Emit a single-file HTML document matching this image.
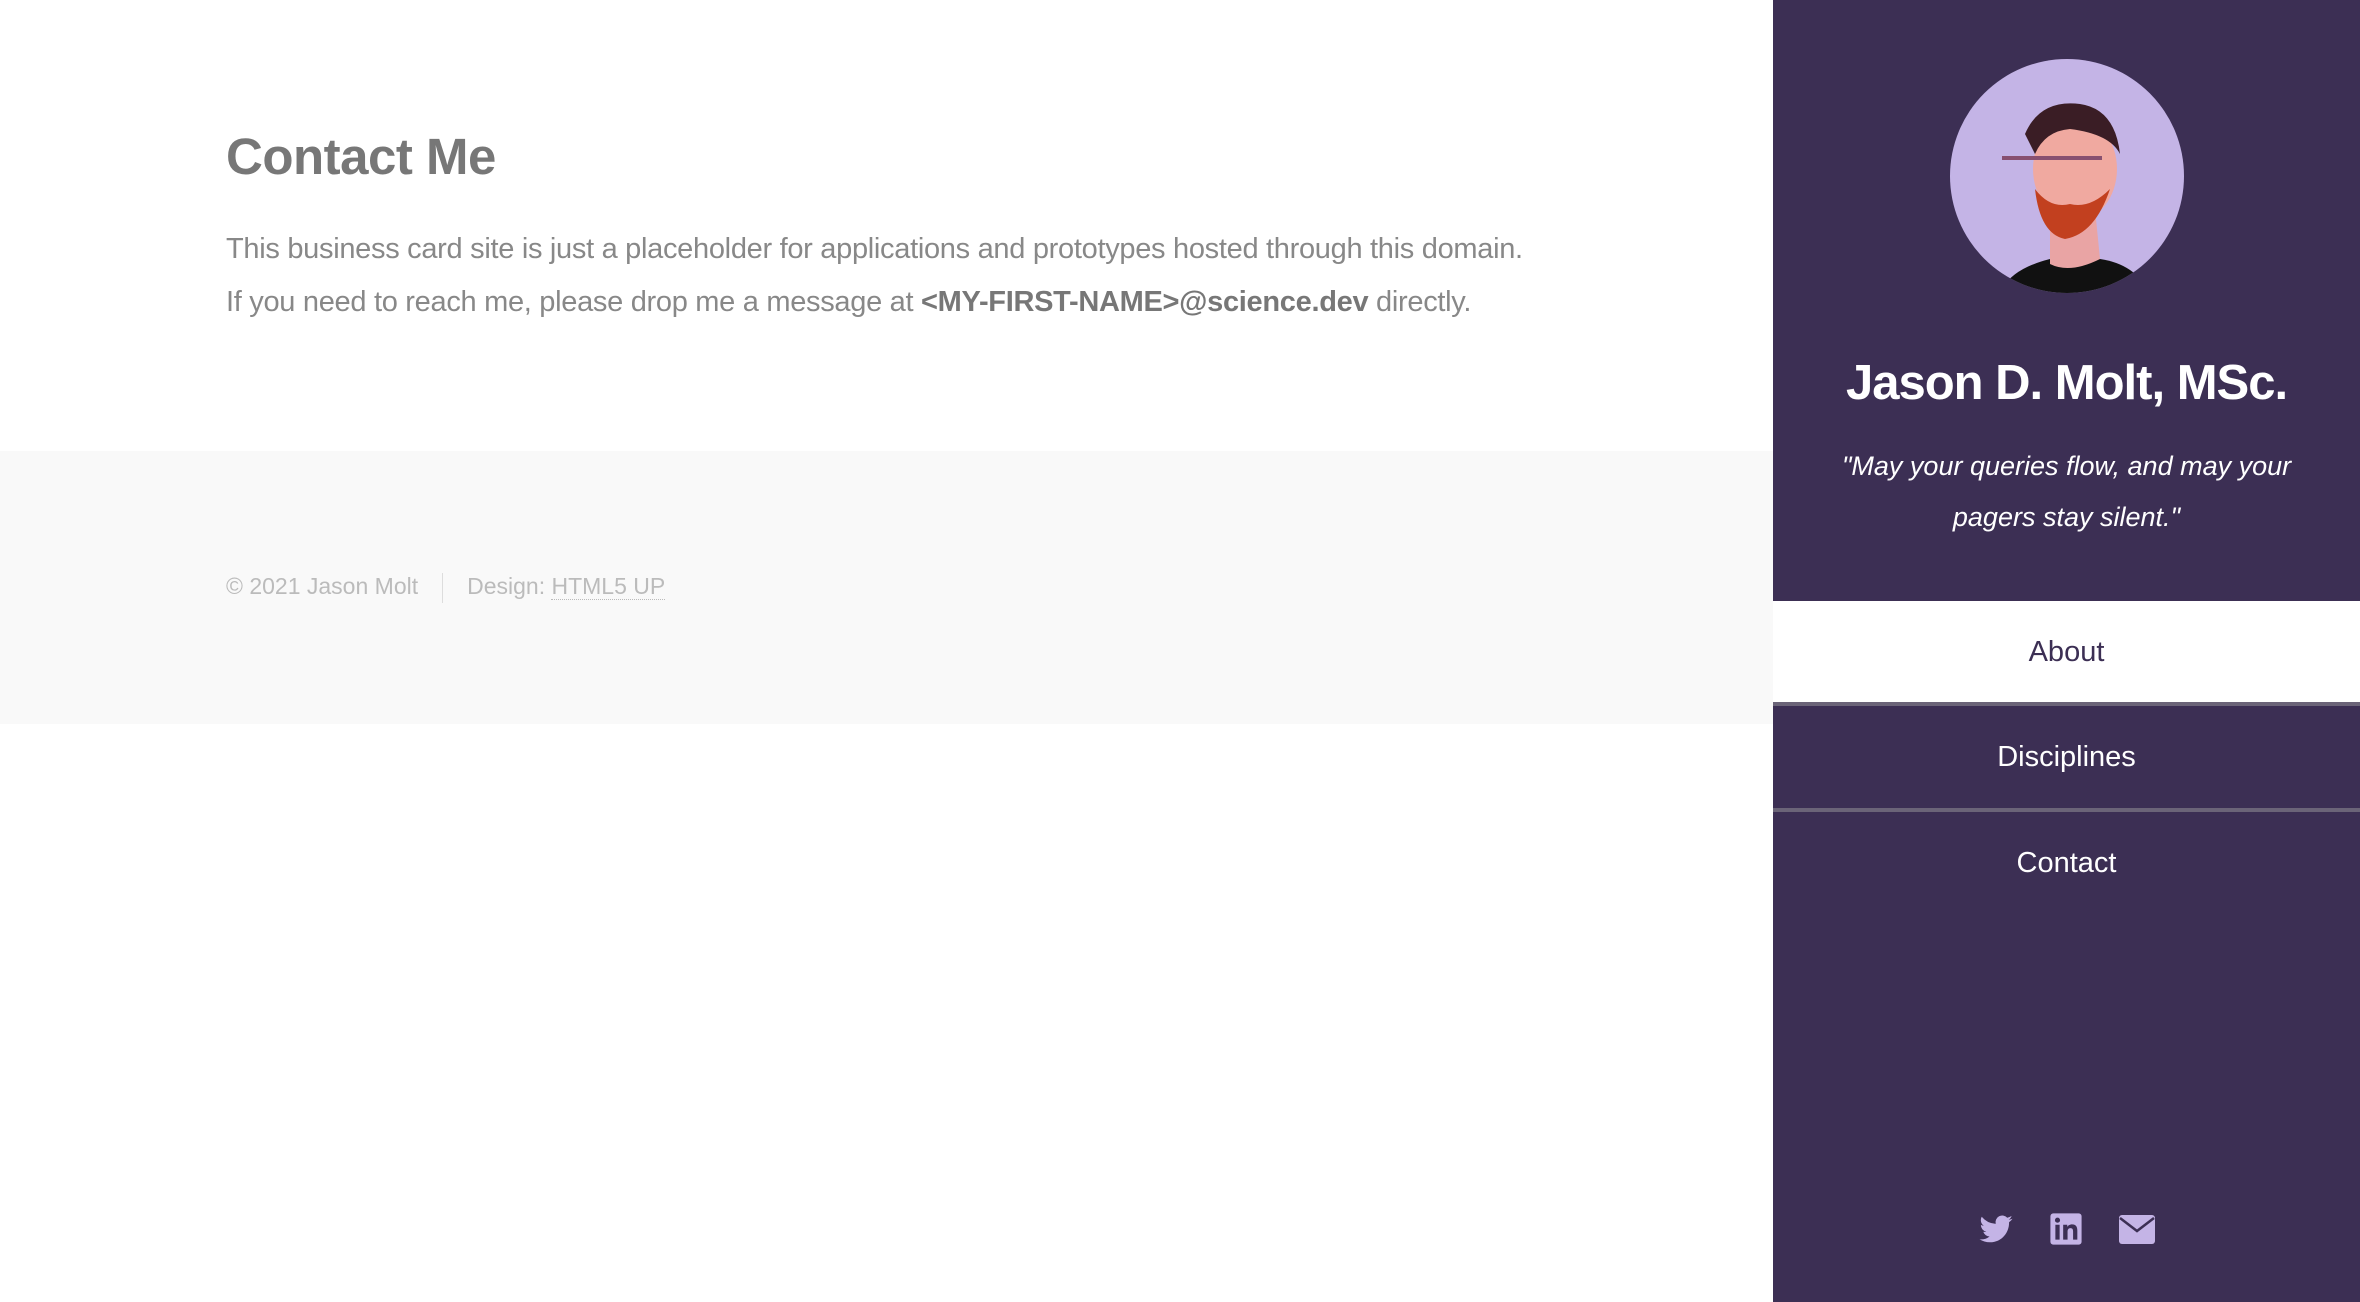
<!DOCTYPE html>
<html><head><meta charset="utf-8"><style>
*{margin:0;padding:0;box-sizing:border-box}
body{width:2360px;height:1302px;background:#fff;font-family:"Liberation Sans",sans-serif;position:relative;overflow:hidden}
.main{position:absolute;left:0;top:0;width:1773px}
h1{position:absolute;left:226px;top:127px;font-size:51px;color:#777;font-weight:bold;letter-spacing:-0.5px;white-space:nowrap}
.p{position:absolute;left:226px;font-size:29px;color:#888;white-space:nowrap;letter-spacing:-0.3px}
.p b{color:#777}
.foot{position:absolute;left:0;top:451px;width:1773px;height:273px;background:#f9f9f9}
.ft{position:absolute;left:226px;top:122px;font-size:23px;color:#bbb;white-space:nowrap}
.ft .sep{display:inline-block;width:1px;height:30px;background:#ddd;vertical-align:middle;margin:0 24px}
.ft u{text-decoration:none;border-bottom:1px dotted #bbb}
.side{position:absolute;left:1773px;top:0;width:587px;height:1302px;background:#3c2f54}
.av{position:absolute;left:177px;top:59px;width:234px;height:234px;border-radius:50%;background:#c4b4e6;overflow:hidden}
.name{position:absolute;top:355px;width:100%;text-align:center;color:#fff;font-weight:bold;font-size:49px;letter-spacing:-1px}
.q{position:absolute;top:441px;width:100%;text-align:center;color:#fff;font-style:italic;font-size:27px;line-height:51px}
.nav{position:absolute;width:100%;height:102px;line-height:102px;text-align:center;font-size:29px;color:#fff}
.ln{position:absolute;width:100%;height:4px;background:#6b6478}
.ic{position:absolute;top:1212px}
</style></head><body>
<div class="main">
<h1>Contact Me</h1>
<div class="p" style="top:233px">This business card site is just a placeholder for applications and prototypes hosted through this domain.</div>
<div class="p" style="top:286px">If you need to reach me, please drop me a message at <b>&lt;MY-FIRST-NAME&gt;@science.dev</b> directly.</div>
</div>
<div class="foot"><div class="ft">© 2021 Jason Molt<span class="sep"></span>Design: <u>HTML5 UP</u></div></div>
<div class="side">
<div class="av"><svg width="234" height="234" viewBox="0 0 234 234">
<path d="M50 234 Q60 210 100 200 L150 200 Q185 205 200 234Z" fill="#111"/>
<path d="M100 160 L100 205 Q120 215 150 200 L145 150Z" fill="#e9a4a4"/>
<ellipse cx="125" cy="110" rx="42" ry="52" fill="#f0a9a0"/>
<path d="M85 130 Q90 175 115 180 Q145 175 160 130 Q140 150 120 145 Q100 150 85 130Z" fill="#c2401f"/>
<path d="M75 75 Q90 40 130 45 Q165 50 170 95 Q160 75 120 70 Q95 72 85 95Z" fill="#3a1d25"/>
<rect x="52" y="97" width="100" height="4" fill="#885070"/>
</svg></div>
<div class="name">Jason D. Molt, MSc.</div>
<div class="q">"May your queries flow, and may your<br>pagers stay silent."</div>
<div class="nav" style="top:601px;background:#fff;color:#3c2f54">About</div>
<div class="ln" style="top:702px"></div>
<div class="nav" style="top:706px">Disciplines</div>
<div class="ln" style="top:808px"></div>
<div class="nav" style="top:812px">Contact</div>
<svg class="ic" style="left:205px" width="36" height="36" viewBox="0 0 24 24"><path fill="#c4b4e6" d="M23 4.5a9 9 0 0 1-2.6.7 4.6 4.6 0 0 0 2-2.5 9 9 0 0 1-2.9 1.1A4.5 4.5 0 0 0 11.8 7.9 12.8 12.8 0 0 1 2.5 3.2a4.5 4.5 0 0 0 1.4 6 4.5 4.5 0 0 1-2-.6 4.5 4.5 0 0 0 3.6 4.5 4.5 4.5 0 0 1-2 .1 4.5 4.5 0 0 0 4.2 3.1A9 9 0 0 1 1 18.2a12.8 12.8 0 0 0 6.9 2c8.3 0 12.8-6.9 12.8-12.8v-.6A9 9 0 0 0 23 4.5z"/></svg>
<svg class="ic" style="left:276px" width="34" height="34" viewBox="0 0 24 24"><rect x="1" y="1" width="22" height="22" rx="2" fill="#c4b4e6"/><rect x="4.5" y="9" width="3" height="10.5" fill="#3c2f54"/><circle cx="6" cy="5.8" r="1.8" fill="#3c2f54"/><path d="M10 9h2.9v1.5c.5-.9 1.7-1.8 3.4-1.8 3 0 3.7 2 3.7 4.6v6.2h-3v-5.5c0-1.3-.2-2.6-1.8-2.6s-2.1 1.2-2.1 2.5v5.6H10z" fill="#3c2f54"/></svg>
<svg class="ic" style="left:345px;top:1214px" width="38" height="32" viewBox="0 0 38 32"><rect x="1" y="1" width="36" height="29" rx="3" fill="#c4b4e6"/><path d="M2 4 L19 17 L36 4" fill="none" stroke="#3c2f54" stroke-width="2.5"/></svg>
</div>
</body></html>
